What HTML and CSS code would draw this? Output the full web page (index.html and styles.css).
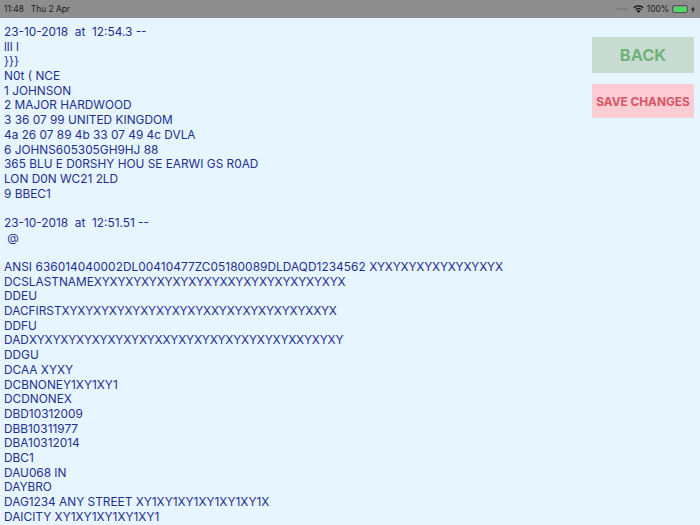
FILE: index.html
```html
<!DOCTYPE html>
<html lang="en">
<head>
<meta charset="utf-8">
<title>Scan log</title>
<link rel="stylesheet" href="styles.css">
</head>
<body>
<div class="status">
  <div class="status-left"><span>11:48</span><span>Thu 2 Apr</span></div>
  <div class="status-right">
    <span class="signal"><i></i><i></i><i></i><i></i></span>
    <svg class="wifi" width="11" height="8" viewBox="0 0 11 8"><path d="M5.5 8 3.7 5.9a2.6 2.6 0 0 1 3.6 0Z" fill="#111"/><path d="M2.6 4.7a4.3 4.3 0 0 1 5.8 0" fill="none" stroke="#111" stroke-width="1.2"/><path d="M.8 2.8a6.8 6.8 0 0 1 9.4 0" fill="none" stroke="#111" stroke-width="1.2"/></svg>
    <span>100%</span>
    <span class="battery"><b></b></span>
    <svg class="bolt" width="4" height="7" viewBox="0 0 4 7"><path d="M2.4 0 0 4h1.6L1.2 7 4 2.8H2.3Z" fill="#222"/></svg>
  </div>
</div>
<main class="main">
<div class="log">23-10-2018  at  12:54.3 --
lll l
}}}
N0t ( NCE
1 JOHNSON
2 MAJOR HARDWOOD
3 36 07 99 UNITED KINGDOM
4a 26 07 89 4b 33 07 49 4c DVLA
6 JOHNS605305GH9HJ 88
365 BLU E D0RSHY HOU SE EARWI GS R0AD
LON D0N WC21 2LD
9 BBEC1

23-10-2018  at  12:51.51 --
 @

<span class="id">ANSI 636014040002DL00410477ZC05180089DLDAQD1234562 </span><span class="fill">XYXYXYXYXYXYXYXYX</span>
DCSLASTNAME<span class="fill">XYXYXYXYXYXYXYXYXXYXYXYXYXYXYXYX</span>
DDEU
DACFIRST<span class="fill">XYXYXYXYXYXYXYXYXYXXYXYXYXYXYXYXXYX</span>
DDFU
DAD<span class="fill">XYXYXYXYXYXYXYXYXXYXYXYXYXYXYXYXYXXYXYXY</span>
DDGU
DCAA XYXY
DCBNONEY1XY1XY1
DCDNONEX
DBD10312009
DBB10311977
DBA10312014
DBC1
DAU068 IN
DAYBRO
DAG1234 ANY STREET XY1XY1XY1XY1XY1XY1X
DAICITY XY1XY1XY1XY1XY1</div>
<aside class="actions">
  <button class="btn btn-back">BACK</button>
  <button class="btn btn-save">SAVE CHANGES</button>
</aside>
</main>
</body>
</html>
```
FILE: styles.css
```css
* { box-sizing: border-box; }
html, body { margin: 0; height: 100%; overflow: hidden; }
body { background: #e6f5ff; font-family: Inter, sans-serif; display: flex; flex-direction: column; }
.status { height: 18px; flex: none; background: #8e8e8e; display: flex; justify-content: space-between; align-items: center; padding: 0 5px 0 4px; font-size: 8.4px; color: #1c1c1c; }
.status-left { display: flex; gap: 7px; }
.status-right { display: flex; align-items: center; gap: 3px; }
.signal { display: flex; gap: 1.5px; margin-right: 2px; align-items: flex-end; }
.signal i { width: 1.5px; height: 1.5px; background: #767676; }
.battery { width: 16px; height: 8px; border: 1px solid #555; border-radius: 2px; padding: 0.5px; display: flex; }
.battery b { flex: 1; background: #4cd964; border-radius: 1px; }
.main { flex: 1; min-height: 0; display: flex; justify-content: space-between; overflow: hidden; }
.log { white-space: pre; margin: 7px 0 0 4px; font-size: 11.85px; line-height: 14.68px; color: #1f2f8f; }
.id { letter-spacing: 0.06px; }
.fill { letter-spacing: -0.2px; }
.actions { flex: none; display: flex; flex-direction: column; gap: 11px; width: 102px; margin: 19px 6px 0 0; }
.btn { border: 0; padding: 0; font-family: Inter, sans-serif; font-weight: 700; }
.btn-back { height: 36px; background: #c9dcd3; color: #71b27a; font-size: 16.4px; }
.btn-save { height: 34px; background: #fbccd3; color: #d65563; font-size: 11.85px; padding-top: 1px; }
```
